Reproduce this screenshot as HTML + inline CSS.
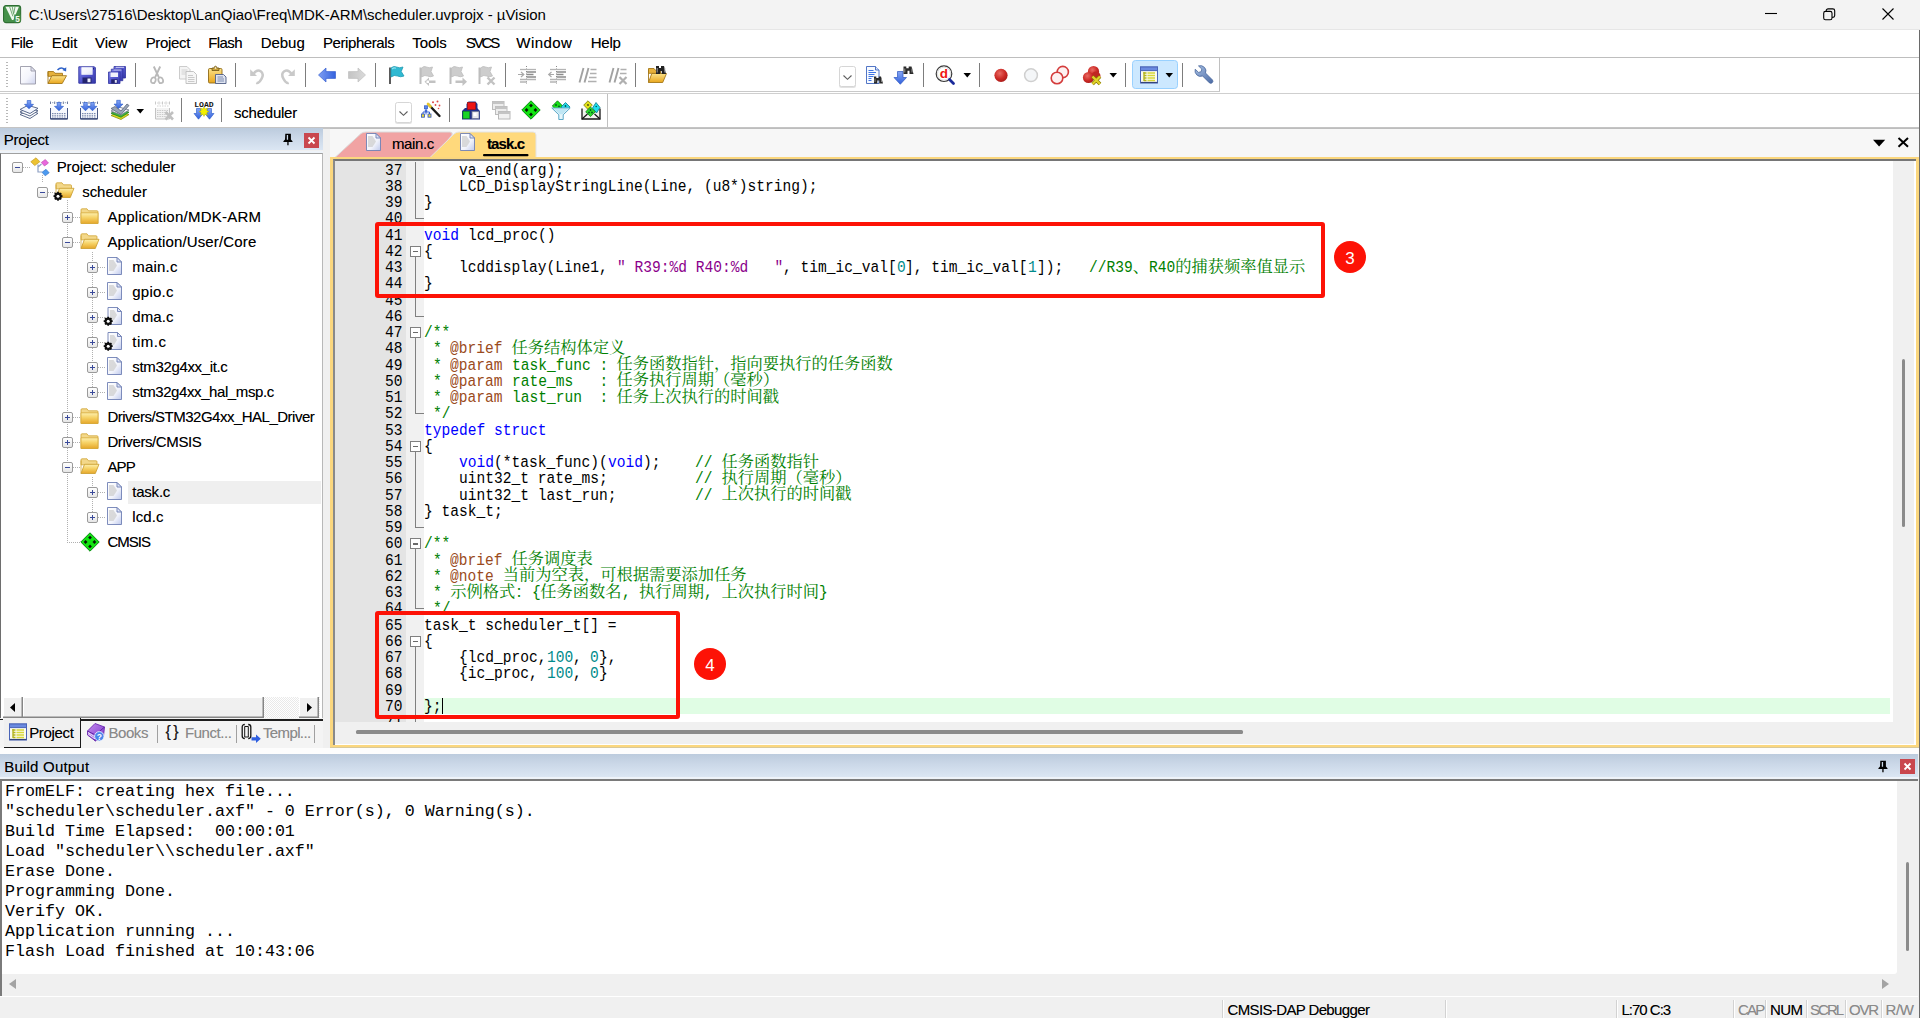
<!DOCTYPE html>
<html lang="zh"><head><meta charset="utf-8"><title>scheduler.uvprojx - µVision</title>
<style>
*{box-sizing:border-box;margin:0;padding:0}
html,body{width:1920px;height:1018px;overflow:hidden;background:#f0f0f0}
body{position:relative;font-family:"Liberation Sans","Noto Sans CJK SC",sans-serif;font-size:15px;color:#000}
.abs{position:absolute}
.t{position:absolute;white-space:pre;line-height:20px;height:20px;text-shadow:0 0 .6px rgba(0,0,0,.42)}
#title .t{text-shadow:none}
.t.g,.t[style*="#8a8a8a"]{text-shadow:0 0 .6px rgba(120,120,120,.4)}
#title{left:0;top:0;width:1920px;height:30px;background:#f3f3f3;border-bottom:1px solid #e6e6e6}
#menu{left:0;top:30px;width:1920px;height:27px;background:#fff}
#menu .t{top:3px}
#tb1{left:0;top:56.500px;width:1920px;height:36.500px;background:#fff;border-top:1.500px solid #bebebe}
#tb2{left:0;top:93px;width:1920px;height:35px;background:#fff;border-top:1px solid #cfcfcf}
.sep{position:absolute;width:1.3px;height:24px;background:#7d7d7d;top:5px}
.grip{position:absolute;left:6px;top:4px;width:2px;height:26px;background:repeating-linear-gradient(#b8b8b8 0 1px,transparent 1px 3px)}
.ic{position:absolute;width:20px;height:20px;top:7px}
.ic svg{display:block;width:20px;height:20px}
.hdr{position:absolute;background:linear-gradient(#bccbdd,#cbd8e8 45%,#dbe6f3);}
.hdr .t{left:5px;top:2px}
.pin{position:absolute}
.xbtn{position:absolute;width:15px;height:15px;background:#c9474e}
/* project */
#proj{left:0;top:153px;width:323px;height:565px;background:#fff;border-left:1.3px solid #6e6e6e;border-top:1.3px solid #a0a0a0;border-right:1.3px solid #b8b8b8}
.row{position:absolute;left:0;height:25px;width:320px}
.row .t{top:2px;height:20px;line-height:20px}
.box{position:absolute;width:11px;height:11px;border:1px solid #9a9a9a;border-radius:2px;background:linear-gradient(#fff,#e6e6e6)}
.box:before{content:"";position:absolute;left:2px;top:4px;width:5px;height:1px;background:#3a4a9a}
.box.p:after{content:"";position:absolute;left:4px;top:2px;width:1px;height:5px;background:#3a4a9a}
.dh{position:absolute;height:1px;background:repeating-linear-gradient(90deg,#b0b0b0 0 1px,transparent 1px 2px)}
.dv{position:absolute;width:1px;background:repeating-linear-gradient(#b0b0b0 0 1px,transparent 1px 2px)}
/* editor */
#edwrap{left:330px;top:128px;width:1589px;height:30px;background:#f7f7f7;border-top:1px solid #bdbdbd}
#edframe{left:330px;top:157px;width:1588.5px;height:591px;background:#fbd77e;border-bottom:1px solid #d8c99a}
#edin{left:3px;top:2px;width:1583px;height:586px;background:#fff;border-left:2px solid #8a8a8a;border-top:2.300px solid #767676}
#code{left:0;top:0;width:1558px;height:560.500px;background:#fff;overflow:hidden}
#gut{left:0;top:0;width:71px;height:561px;background:#e4e4e4}
#fold{left:71px;top:0;width:18px;height:561px;background:#f1f1f1}
.ln{left:50.200px;color:#000}
.fl{position:absolute;left:80px;top:0;width:1px;height:17px;background:#808080}
.fe{position:absolute;left:80px;top:0;width:9px;height:9px;border-left:1px solid #808080;border-bottom:1px solid #808080}
.fb{position:absolute;left:75px;top:3px;width:11px;height:11px;border:1px solid #808080;background:#fff}
.fb:before{content:"";position:absolute;left:2px;top:4px;width:5px;height:1.200px;background:#6a6a6a}
.fb:after{content:"";position:absolute;left:4px;top:10px;width:1px;height:4px;background:#808080}
.cl{position:absolute;left:0;height:17px;width:1556px}
.cd{font-family:"Liberation Mono","Noto Serif CJK SC",monospace;font-size:17.5px;line-height:17px;white-space:pre}
.r{position:absolute;top:0;font-size:16.67px;transform:scaleX(.875);transform-origin:0 0;white-space:pre}
.cj{position:absolute;top:-2.500px;font-family:"Noto Serif CJK SC","Noto Sans CJK SC",serif;font-size:16.25px;white-space:pre}
.k{color:#0000ff}.s{color:#8b008b}.n{color:#008b8b}.c{color:#008000}.d{color:#9a4a20}
.redbox{position:absolute;border:4px solid #fd1206;border-radius:3px}
.badge{position:absolute;width:32px;height:32px;border-radius:16px;background:#fd1206;color:#fff;font-size:17px;line-height:35.500px;text-align:center}
/* build */
#bo{left:0;top:779px;width:1918px;height:217px;background:#f0f0f0;border-left:2px solid #7a7a7a;border-top:2px solid #7a7a7a}
#botext{left:0;top:0;width:1895px;height:193px;border-radius:0 0 3px 0;background:#fff;font-family:"Liberation Mono",monospace;font-size:16.67px;line-height:20px;white-space:pre;padding:1px 0 0 3px;color:#000}
#status{left:0;top:996px;width:1918px;height:22px;background:#f0f0f0;border-top:1px solid #fff}
#status .t{line-height:20px}
.g{color:#8a8a8a}
</style></head>
<body><svg width="0" height="0" style="position:absolute"><defs>
<linearGradient id="gGold" x1="0" y1="0" x2="0" y2="1"><stop offset="0" stop-color="#fbe28a"/><stop offset="1" stop-color="#e9a61c"/></linearGradient>
<linearGradient id="gGold2" x1="0" y1="0" x2="1" y2="1"><stop offset="0" stop-color="#fdeea8"/><stop offset="1" stop-color="#eab233"/></linearGradient>
<linearGradient id="gPage" x1="0" y1="0" x2="1" y2="1"><stop offset="0" stop-color="#ffffff"/><stop offset=".55" stop-color="#f4f5fc"/><stop offset="1" stop-color="#cfd4ee"/></linearGradient>
<linearGradient id="gDisk" x1="0" y1="0" x2="1" y2="1"><stop offset="0" stop-color="#7f82e6"/><stop offset=".5" stop-color="#5558cf"/><stop offset="1" stop-color="#3437a6"/></linearGradient>
<linearGradient id="gBlue" x1="0" y1="0" x2="0" y2="1"><stop offset="0" stop-color="#86a6f4"/><stop offset="1" stop-color="#2f5fdc"/></linearGradient>
<linearGradient id="gBlueH" x1="0" y1="0" x2="1" y2="0"><stop offset="0" stop-color="#7d9df2"/><stop offset="1" stop-color="#3563de"/></linearGradient>
<linearGradient id="gGrayH" x1="0" y1="0" x2="1" y2="0"><stop offset="0" stop-color="#c4c4c4"/><stop offset="1" stop-color="#dadada"/></linearGradient>
<radialGradient id="gRed" cx=".4" cy=".35" r=".7"><stop offset="0" stop-color="#e86a62"/><stop offset=".6" stop-color="#cc2a26"/><stop offset="1" stop-color="#a81a18"/></radialGradient>
<linearGradient id="gWrench" x1="0" y1="0" x2="1" y2="1"><stop offset="0" stop-color="#a8c0e4"/><stop offset="1" stop-color="#4a6aa4"/></linearGradient>
<linearGradient id="gFolder" x1="0" y1="0" x2="0" y2="1"><stop offset="0" stop-color="#fdf0b0"/><stop offset=".45" stop-color="#f6d266"/><stop offset="1" stop-color="#e6a72a"/></linearGradient>
<linearGradient id="gFile" x1="0" y1="0" x2="1" y2="1"><stop offset="0" stop-color="#ffffff"/><stop offset=".6" stop-color="#f1f3fb"/><stop offset="1" stop-color="#bfc9ec"/></linearGradient>
<linearGradient id="gBooks" x1="0" y1="0" x2="1" y2="1"><stop offset="0" stop-color="#c48af0"/><stop offset="1" stop-color="#7a34c8"/></linearGradient>
</defs></svg>
<div class="abs" style="left:1918.5px;top:30px;width:1.5px;height:988px;background:#6a6a6a;z-index:9"></div>
<div id="title" class="abs">
<span class="abs" style="left:2.800px;top:4.700px;width:18.200px;height:18.200px"><svg width="18.2" height="18.2" viewBox="0 0 20 20" overflow="visible"><rect x=".6" y=".6" width="18.800" height="18.800" rx="2.800" fill="#46904a" stroke="#2e6e32" stroke-width="1.200"/><path d="M2.700 2h14.800l-6.100 14.400h-1.500z" fill="#f2f8f0"/><path d="M7.300 2l3.600 10.500M10.200 2l1.600 8.500M13.200 2l-1.300 7" stroke="#46904a" stroke-width=".8" fill="none"/><rect x="12.300" y="10.500" width="7" height="8.500" fill="#46904a"/><text x="16" y="18.300" font-size="9" font-weight="bold" text-anchor="middle" fill="#f6fbf4" font-family="Liberation Sans,sans-serif">5</text></svg></span>
<span class="t" style="left:28.7px;top:5.3px;letter-spacing:-0.02px;">C:\Users\27516\Desktop\LanQiao\Freq\MDK-ARM\scheduler.uvprojx - µVision</span>
<svg class="abs" style="left:1750px;top:0" width="170" height="30" viewBox="0 0 170 30" fill="none" stroke="#000" stroke-width="1.1"><path d="M15 13.5h12"/><rect x="73.700" y="11.400" width="8.300" height="8.300" rx="1.800"/><path d="M76.200 11.400v-.6a1.900 1.900 0 0 1 1.900-1.900h4.700a1.900 1.900 0 0 1 1.900 1.900v4.700a1.900 1.900 0 0 1-1.900 1.900h-.6"/><path d="M132.5 8.5l11 11M143.5 8.5l-11 11"/></svg>
</div>
<div id="menu" class="abs">
<span class="t" style="left:10.7px;top:3px;letter-spacing:-0.39px;">File</span>
<span class="t" style="left:51.7px;top:3px;letter-spacing:-0.06px;">Edit</span>
<span class="t" style="left:95px;top:3px;letter-spacing:0.01px;">View</span>
<span class="t" style="left:145.7px;top:3px;letter-spacing:-0.34px;">Project</span>
<span class="t" style="left:208.3px;top:3px;letter-spacing:-0.60px;">Flash</span>
<span class="t" style="left:260.7px;top:3px;letter-spacing:-0.04px;">Debug</span>
<span class="t" style="left:323px;top:3px;letter-spacing:-0.42px;">Peripherals</span>
<span class="t" style="left:412.3px;top:3px;letter-spacing:-0.12px;">Tools</span>
<span class="t" style="left:465.7px;top:3px;letter-spacing:-2.06px;">SVCS</span>
<span class="t" style="left:516.3px;top:3px;letter-spacing:0.44px;">Window</span>
<span class="t" style="left:590.7px;top:3px;letter-spacing:-0.21px;">Help</span>
</div>
<div id="tb1" class="abs"><div class="grip"></div>
<span class="ic" style="left:18px"><svg width="20" height="20" viewBox="0 0 20 20" overflow="visible"><path d="M2.500 1.500h10.500l4.500 4.500v13h-15z" fill="url(#gPage)" stroke="#9a9aa8" stroke-width=".9"/><path d="M13 1.500v4.500h4.500z" fill="#e2e4f2" stroke="#9a9aa8" stroke-width=".9"/></svg></span>
<span class="ic" style="left:47px"><svg width="20" height="20" viewBox="0 0 20 20" overflow="visible"><path d="M1 6.500h5.500l1.500 1.800h7.500v3h-14.500z" fill="#e7b13a" stroke="#a5781a" stroke-width=".9"/><path d="M1 18.500v-12" stroke="#a5781a" stroke-width=".9"/><path d="M1 18.500l3.800-7.800h14.700l-4.300 7.800z" fill="url(#gGold)" stroke="#a5781a" stroke-width=".9"/><path d="M10.500 5q3.500-3.800 7.200-.6" fill="none" stroke="#2f62c8" stroke-width="1.500"/><path d="M19.300 2.200l-.2 4.300-3.800-1.600z" fill="#2f62c8"/></svg></span>
<span class="ic" style="left:77px"><svg width="20" height="20" viewBox="0 0 20 20" overflow="visible"><path d="M1.800 1.800h15.600l1 1v15.400h-16.600z" fill="url(#gDisk)" stroke="#3033a0" stroke-width=".9"/><rect x="4.500" y="2.300" width="11" height="7.400" fill="#f3f4fd"/><rect x="4.500" y="2.300" width="11" height="7.400" fill="url(#gPage)" opacity=".6"/><rect x="5.500" y="12.500" width="9" height="5.700" fill="#23246e"/><rect x="10.500" y="13.500" width="3" height="3.700" fill="#eceefa"/><rect x="16" y="3" width="1" height="1.500" fill="#23246e"/></svg></span>
<span class="ic" style="left:107px"><svg width="20" height="20" viewBox="0 0 20 20" overflow="visible"><path d="M7 1.500h11.500v11.500h-11.500z" fill="url(#gDisk)" stroke="#3033a0" stroke-width=".8"/><path d="M4.300 4.200h11.500v11.500h-11.500z" fill="url(#gDisk)" stroke="#3033a0" stroke-width=".8"/><path d="M1.500 7h11.500v11.500h-11.500z" fill="url(#gDisk)" stroke="#3033a0" stroke-width=".8"/><rect x="3.500" y="7.500" width="7.500" height="4.500" fill="#f1f2fc"/><rect x="4.200" y="14.300" width="6.300" height="4.200" fill="#23246e"/><rect x="7.800" y="15" width="2" height="2.800" fill="#e4e6f8"/><path d="M9 2.300h8M6.500 5h8" stroke="#e8e9fb" stroke-width="1" opacity=".8"/></svg></span>
<div class="sep" style="left:135px"></div>
<span class="ic" style="left:147px"><svg width="20" height="20" viewBox="0 0 20 20" overflow="visible"><path d="M6.800 1.500l5.200 11.200M13.200 1.500l-5.200 11.200" stroke="#b9b9b9" stroke-width="1.900" fill="none"/><ellipse cx="6.300" cy="15.300" rx="2.300" ry="2.900" fill="none" stroke="#b9b9b9" stroke-width="1.700" transform="rotate(20 6.300 15.300)"/><ellipse cx="13.700" cy="15.300" rx="2.300" ry="2.900" fill="none" stroke="#b9b9b9" stroke-width="1.700" transform="rotate(-20 13.700 15.300)"/></svg></span>
<span class="ic" style="left:177.5px"><svg width="20" height="20" viewBox="0 0 20 20" overflow="visible"><path d="M1.500 1.500h7.500l3 3v9.500h-10.500z" fill="#f4f4f4" stroke="#c6c6c6" stroke-width=".9"/><path d="M3.500 5h6M3.500 7h6M3.500 9h4" stroke="#d2d2d2"/><path d="M8 6.500h7.500l3 3v9h-10.500z" fill="#f6f6f6" stroke="#bdbdbd" stroke-width=".9"/><path d="M10 10.500h5M10 12.500h6.500M10 14.500h6.500M10 16.500h6.500" stroke="#cacaca"/></svg></span>
<span class="ic" style="left:206.5px"><svg width="20" height="20" viewBox="0 0 20 20" overflow="visible"><rect x="1.500" y="3.500" width="13.500" height="14.500" rx="1.200" fill="url(#gGold)" stroke="#8f6a16" stroke-width=".9"/><path d="M5 5.500v-2.500h2q.3-1.800 1.500-1.800t1.500 1.800h2v2.500z" fill="#caa23a" stroke="#6f5512" stroke-width=".8"/><circle cx="8.500" cy="3" r=".8" fill="#fff"/><path d="M8.500 9.500h8l2.500 2.500v6.500h-10.500z" fill="#dfe4f1" stroke="#4f5f86" stroke-width=".9"/><path d="M10.500 12h5.500M10.500 14h6.500M10.500 16h6.500" stroke="#7f8db0"/></svg></span>
<div class="sep" style="left:235px"></div>
<span class="ic" style="left:247.5px"><svg width="20" height="20" viewBox="0 0 20 20" overflow="visible"><path d="M2.200 4.200v6.800h6.800z" fill="#c9c9c9"/><path d="M5.500 8.800q3.500-5 7.200-2.500t.8 7.500-5.200 4" fill="none" stroke="#c9c9c9" stroke-width="2.500"/></svg></span>
<span class="ic" style="left:277px"><svg width="20" height="20" viewBox="0 0 20 20" overflow="visible"><path d="M17.800 4.200v6.800h-6.800z" fill="#c9c9c9"/><path d="M14.500 8.800q-3.500-5-7.200-2.500t-.8 7.500 5.200 4" fill="none" stroke="#c9c9c9" stroke-width="2.500"/></svg></span>
<div class="sep" style="left:305px"></div>
<span class="ic" style="left:317px"><svg width="20" height="20" viewBox="0 0 20 20" overflow="visible"><path d="M1.500 10l7.500-7v3.600h9.500v6.800h-9.500v3.600z" fill="url(#gBlueH)" stroke="#3a62d0" stroke-width=".7"/></svg></span>
<span class="ic" style="left:347px"><svg width="20" height="20" viewBox="0 0 20 20" overflow="visible"><path d="M18.500 10l-7.500-7v3.600h-9.500v6.800h9.500v3.600z" fill="url(#gGrayH)" stroke="#c0c0c0" stroke-width=".7"/></svg></span>
<div class="sep" style="left:375px"></div>
<span class="ic" style="left:386px"><svg width="20" height="20" viewBox="0 0 20 20" overflow="visible"><path d="M4 2.500v16.500" stroke="#5a5a5a" stroke-width="2"/><path d="M5 3q2.500-2.500 5.500-1t6.500 0l-1.800 4.500 2.800 4.500q-3.500 1.500-6.500 0t-6.500 1z" fill="#2fb9d2" stroke="#1e9ab2" stroke-width=".8"/><path d="M6 4q2-1.500 4-.8" stroke="#8fe0ee" stroke-width="1.200" fill="none"/></svg></span>
<span class="ic" style="left:416.5px"><svg width="20" height="20" viewBox="0 0 20 20" overflow="visible"><path d="M3.500 2.500v16.500" stroke="#bdbdbd" stroke-width="2"/><path d="M4.500 3q2.500-2.500 5-1t6 0l-1.500 4.500 2.500 4.500q-3.500 1.500-6 0t-6 1z" fill="#cdcdcd" stroke="#bdbdbd" stroke-width=".8"/><path d="M9.500 15.500h9v2.500h-9zM12 12.500l-4.500 4.200 4.500 4.200z" fill="#c2c2c2"/></svg></span>
<span class="ic" style="left:446.5px"><svg width="20" height="20" viewBox="0 0 20 20" overflow="visible"><path d="M3.500 2.500v16.500" stroke="#bdbdbd" stroke-width="2"/><path d="M4.500 3q2.500-2.500 5-1t6 0l-1.500 4.500 2.500 4.500q-3.500 1.500-6 0t-6 1z" fill="#cdcdcd" stroke="#bdbdbd" stroke-width=".8"/><path d="M8.500 15.500h9v2.500h-9zM15.500 12.500l4.500 4.200-4.500 4.200z" fill="#c2c2c2"/></svg></span>
<span class="ic" style="left:476px"><svg width="20" height="20" viewBox="0 0 20 20" overflow="visible"><path d="M3.500 2.500v16.500" stroke="#bdbdbd" stroke-width="2"/><path d="M4.500 3q2.500-2.500 5-1t6 0l-1.500 4.500 2.500 4.500q-3.500 1.500-6 0t-6 1z" fill="#cdcdcd" stroke="#bdbdbd" stroke-width=".8"/><path d="M11.500 12.500l7 7M18.500 12.500l-7 7" stroke="#c2c2c2" stroke-width="2.400"/></svg></span>
<div class="sep" style="left:505px"></div>
<span class="ic" style="left:517px"><svg width="20" height="20" viewBox="0 0 20 20" overflow="visible"><path d="M9.500 1v18" stroke="#8a8a8a" stroke-width="1" stroke-dasharray="1 1.500"/><path d="M3 4.500h16" stroke="#b4b4b4" stroke-width="1.300"/><path d="M9.500 7h9.500M9.500 9.500h7M9.500 12h9.500" stroke="#8c8c8c" stroke-width="1.600"/><path d="M3 14.500h16M3 17h7" stroke="#b4b4b4" stroke-width="1.300"/><path d="M1 9.500h5M4 7l2.800 2.500-2.800 2.500" stroke="#a8a8a8" stroke-width="1.200" fill="none"/></svg></span>
<span class="ic" style="left:547px"><svg width="20" height="20" viewBox="0 0 20 20" overflow="visible"><path d="M9.500 1v18" stroke="#8a8a8a" stroke-width="1" stroke-dasharray="1 1.500"/><path d="M3 4.500h16" stroke="#b4b4b4" stroke-width="1.300"/><path d="M9.500 7h9.500M9.500 9.500h7M9.500 12h9.500" stroke="#8c8c8c" stroke-width="1.600"/><path d="M3 14.500h16M3 17h7" stroke="#b4b4b4" stroke-width="1.300"/><path d="M2 9.500h5M4.500 7l-2.800 2.500 2.800 2.500" stroke="#a8a8a8" stroke-width="1.200" fill="none"/></svg></span>
<span class="ic" style="left:577.5px"><svg width="20" height="20" viewBox="0 0 20 20" overflow="visible"><path d="M5.500 3l-4 14.500M10.500 3l-4 14.500" stroke="#a2a2a2" stroke-width="1.900"/><path d="M12.500 4.500h6M12 8.500h6.500M11 12.500h7.500M10 16.500h8.500" stroke="#b0b0b0" stroke-width="1.300"/></svg></span>
<span class="ic" style="left:607.5px"><svg width="20" height="20" viewBox="0 0 20 20" overflow="visible"><path d="M5.500 3l-4 14.500M10.500 3l-4 14.500" stroke="#a2a2a2" stroke-width="1.900"/><path d="M12.500 4.500h6M12 8.500h6.500" stroke="#b0b0b0" stroke-width="1.300"/><path d="M11.500 12l7 7M18.500 12l-7 7" stroke="#b0b0b0" stroke-width="2.200"/></svg></span>
<div class="sep" style="left:634.5px"></div>
<span class="ic" style="left:646.5px"><svg width="20" height="20" viewBox="0 0 20 20" overflow="visible"><path d="M1.500 3.500h5.500l1.500 1.800h5v3h-12z" fill="#e7b13a" stroke="#a5781a" stroke-width=".9"/><path d="M1.500 17.500v-13" stroke="#a5781a" stroke-width=".9"/><path d="M1.500 17.500l3.300-9h14.700l-3.800 9z" fill="url(#gGold)" stroke="#a5781a" stroke-width=".9"/><path d="M9 1h3v2h2v-2h3l2 8h-4.200v-3h-1.600v3h-4.200z" fill="#222"/><path d="M10.200 3v4.500M17.800 3v4.500" stroke="#a8a8a8" stroke-width=".9"/></svg></span>
<div class="abs" style="left:838.5px;top:8.5px;width:17px;height:21px;border:1px solid #d6d6d6;border-radius:2.500px;background:#fff;box-shadow:0 1px 0 #e2e2e2"><svg width="15" height="19"><path d="M3.500 8.500l4 3.800 4-3.800" fill="none" stroke="#5c5c5c" stroke-width="1.100"/></svg></div>
<span class="ic" style="left:864px"><svg width="20" height="20" viewBox="0 0 20 20" overflow="visible"><path d="M2.500 1.500h9l3.500 3.500v13.500h-12.500z" fill="#f8fbff" stroke="#3f66c0" stroke-width=".9"/><path d="M11.500 1.500v3.500h3.500" fill="#d8e4fa" stroke="#3f66c0" stroke-width=".9"/><path d="M4.500 5.500h5M4.500 7.500h7.500M4.500 9.500h6M4.500 11.500h5M4.500 13.500h3M4.500 15.500h3" stroke="#3e74e4" stroke-width="1.100"/><path d="M10 11.500h2.300v1.500h2.400v-1.500h2.300l2 7h-3.700v-3h-2v3h-3.300z" fill="#2a2a2a"/><path d="M11 13.500v3.500M17.500 13.500v3.500" stroke="#9a9a9a" stroke-width=".8"/></svg></span>
<span class="ic" style="left:894px"><svg width="20" height="20" viewBox="0 0 20 20" overflow="visible"><path d="M3.500 6.500h5.500v6h3.500l-6.200 6.800-6.300-6.800h3.500z" fill="url(#gBlue)" stroke="#2a55c0" stroke-width=".7"/><path d="M9.500 1.500h2.800v1.800h2.400v-1.800h2.800l2 7.500h-4v-3.200h-2v3.200h-4z" fill="#2a2a2a"/><path d="M10.800 3.500v4M18 3.500v4" stroke="#a0a0a0" stroke-width=".9"/></svg></span>
<div class="sep" style="left:922.5px"></div>
<span class="ic" style="left:934.5px"><svg width="20" height="20" viewBox="0 0 20 20" overflow="visible"><circle cx="9" cy="8.700" r="7.800" fill="#fff" stroke="#3a3a3a" stroke-width="1.200"/><circle cx="9" cy="8.700" r="6.500" fill="none" stroke="#d8d8d8" stroke-width=".9"/><path d="M14.500 14.500l4 4" stroke="#1a2a9a" stroke-width="2.800" stroke-linecap="round"/><text x="8.900" y="12.900" font-size="13.500" font-weight="bold" fill="#f01414" text-anchor="middle" font-family="Liberation Sans,sans-serif">d</text></svg></span>
<svg class="abs" style="left:962.5px;top:15.5px" width="9" height="5"><path d="M0.5 0h7.500l-3.750 4.400z" fill="#000"/></svg>
<div class="sep" style="left:978.5px"></div>
<span class="ic" style="left:991px"><svg width="20" height="20" viewBox="0 0 20 20" overflow="visible"><circle cx="10" cy="10.300" r="6.600" fill="url(#gRed)"/></svg></span>
<span class="ic" style="left:1020.5px"><svg width="20" height="20" viewBox="0 0 20 20" overflow="visible"><circle cx="10" cy="10.200" r="6.400" fill="#f4f6f8" stroke="#cfcfcf" stroke-width="1.500"/></svg></span>
<span class="ic" style="left:1050px"><svg width="20" height="20" viewBox="0 0 20 20" overflow="visible"><circle cx="12.800" cy="7" r="5.600" fill="#fdf1f1" stroke="#d43c3c" stroke-width="1.600"/><circle cx="7" cy="13" r="5.800" fill="#fdf1f1" stroke="#d43c3c" stroke-width="1.600"/></svg></span>
<span class="ic" style="left:1082px"><svg width="20" height="20" viewBox="0 0 20 20" overflow="visible"><circle cx="11.500" cy="6.500" r="5.600" fill="url(#gRed)"/><circle cx="14" cy="11" r="4.500" fill="#c02622"/><circle cx="6.500" cy="12.500" r="5.600" fill="url(#gRed)"/><path d="M10.500 11.500l7.500 7.500M18 11.500l-7.500 7.500" stroke="#8a7a00" stroke-width="3.600"/><path d="M10.500 11.500l7.500 7.500M18 11.500l-7.500 7.500" stroke="#e0d22a" stroke-width="2.200"/></svg></span>
<svg class="abs" style="left:1108.5px;top:15.5px" width="9" height="5"><path d="M0.5 0h7.500l-3.750 4.400z" fill="#000"/></svg>
<div class="sep" style="left:1124.5px"></div>
<div class="abs" style="left:1132px;top:2px;width:46px;height:29px;background:#cce8ff;border:1px solid #99d1ff;border-radius:3.500px"></div>
<span class="ic" style="left:1139px"><svg width="20" height="20" viewBox="0 0 20 20" overflow="visible"><rect x="1.500" y="2" width="17" height="16" fill="#fbfbee" stroke="#4a64b8" stroke-width="1"/><rect x="1.500" y="2" width="17" height="3.600" fill="#6a8ae0" stroke="#4a64b8" stroke-width="1"/><path d="M2 17.500h16.500" stroke="#35457a" stroke-width="1.200"/><path d="M5 7v9" stroke="#b4b41e" stroke-width="1.400"/><path d="M4.500 8h3M5 10.500h2.500M5 13h2.500M5 15.500h2.500" stroke="#b4b41e" stroke-width="1.400"/><path d="M8.500 8h7.500M8.500 10.500h7.500M8.500 13h7.500M8.500 15.500h7.500" stroke="#d8d83a" stroke-width="1.600"/></svg></span>
<svg class="abs" style="left:1165px;top:15.5px" width="9" height="5"><path d="M0.5 0h7.500l-3.750 4.400z" fill="#000"/></svg>
<div class="sep" style="left:1181.5px"></div>
<span class="ic" style="left:1192.5px"><svg width="20" height="20" viewBox="0 0 20 20" overflow="visible"><path d="M2.200 4.200l3.300 3.200 2.600-.7.700-2.600-3.300-3.200q3.600-1 6 1.500t1 5.600l7 7q1 1.500-.3 2.700t-2.700.2l-7-7q-3.200 1.400-5.700-1t-1.600-5.700z" fill="url(#gWrench)" stroke="#48669c" stroke-width=".8"/></svg></span>
<div class="abs" style="left:1219px;top:0;width:1px;height:34px;background:#c0c0c0"></div>
<div class="abs" style="left:0;top:33px;width:1220px;height:1px;background:#c9c9c9"></div>
</div>
<div id="tb2" class="abs"><div class="grip"></div>
<span class="ic" style="left:18.5px;top:5.500px"><svg width="20" height="20" viewBox="0 0 20 20" overflow="visible"><path d="M1 14.500l8-4.200 10 3-8 5.200z" fill="#fff" stroke="#4a5a80" stroke-width=".9"/><path d="M1 12l8-4.200 10 3-8 5.200z" fill="#fff" stroke="#4a5a80" stroke-width=".9"/><path d="M1 9.500l8-4.200 10 3-8 5.200z" fill="#f4f7ff" stroke="#4a5a80" stroke-width=".9"/><path d="M8.2 0.5h3.600v3.800h2.700l-4.500 4.500-4.500-4.500h2.700z" fill="url(#gBlue)" stroke="#2458c8" stroke-width=".6"/></svg></span>
<span class="ic" style="left:48.5px;top:5.500px"><svg width="20" height="20" viewBox="0 0 20 20" overflow="visible"><path d="M1.500 8v11h17v-11" fill="#f6f8fd" stroke="#4a5a86" stroke-width="1"/><path d="M1.500 18.800h17" stroke="#3a4a78" stroke-width="1.300"/><path d="M3 13.500h14M3 15.300h14M3 17h14" stroke="#7a88ac" stroke-width="1" stroke-dasharray="1.500 .9"/><path d="M1.500 1.500v2.500M5.700 1.500v2.500M10 1.500v2.500M14.300 1.500v2.500M18.500 1.500v2.500" stroke="#5a6a90" stroke-width=".9"/><path d="M3 2.700h1.400M7.200 2.700h1.400M11.500 2.700h1.400M15.800 2.700h1.400" stroke="#8a98b8" stroke-width=".9"/><path d="M8.2 2.5h3.600v3.800h2.700l-4.500 4.500-4.500-4.500h2.700z" fill="url(#gBlue)" stroke="#2458c8" stroke-width=".6"/></svg></span>
<span class="ic" style="left:78.5px;top:5.500px"><svg width="20" height="20" viewBox="0 0 20 20" overflow="visible"><path d="M1.500 8v11h17v-11" fill="#f6f8fd" stroke="#4a5a86" stroke-width="1"/><path d="M1.500 18.800h17" stroke="#3a4a78" stroke-width="1.300"/><path d="M3 13.500h14M3 15.300h14M3 17h14" stroke="#7a88ac" stroke-width="1" stroke-dasharray="1.500 .9"/><path d="M1.500 1.500v2.500M5.700 1.500v2.500M10 1.500v2.500M14.300 1.500v2.500M18.500 1.500v2.500" stroke="#5a6a90" stroke-width=".9"/><path d="M3 2.700h1.400M7.200 2.700h1.400M11.500 2.700h1.400M15.800 2.700h1.400" stroke="#8a98b8" stroke-width=".9"/><path d="M4.7 2.5h3.600v3.800h2.700l-4.500 4.500-4.500-4.500h2.700z" fill="url(#gBlue)" stroke="#2458c8" stroke-width=".6"/><path d="M11.7 2.5h3.600v3.800h2.700l-4.500 4.500-4.500-4.500h2.700z" fill="url(#gBlue)" stroke="#2458c8" stroke-width=".6"/></svg></span>
<span class="ic" style="left:109.5px;top:5.500px"><svg width="20" height="20" viewBox="0 0 20 20" overflow="visible"><path d="M1 15.500l8-4 10 3-8 5z" fill="#d6dc1e" stroke="#8a8e10" stroke-width=".8"/><path d="M1 13.200l8-4 10 3-8 5z" fill="#3fb83f" stroke="#237a23" stroke-width=".8"/><path d="M1 11l8-4 10 3-8 5z" fill="#f2f4f8" stroke="#6a7488" stroke-width=".8"/><path d="M1 8.500l4-2 6 4.500 6-7 2 1.500-8 9z" fill="#9aa6b8" stroke="#5a6478" stroke-width=".8"/><path d="M6.7 0.3h3.600v3.800h2.700l-4.500 4.500-4.500-4.500h2.700z" fill="url(#gBlue)" stroke="#2458c8" stroke-width=".6"/></svg></span>
<svg class="abs" style="left:135.5px;top:15px" width="9" height="5"><path d="M0.5 0h7.500l-3.750 4.400z" fill="#000"/></svg>
<span class="ic" style="left:153.5px;top:5.500px"><svg width="20" height="20" viewBox="0 0 20 20" overflow="visible"><path d="M1.500 8v11h14v-11" fill="#f3f3f3" stroke="#c2c2c2" stroke-width="1"/><path d="M3 10.500h11M3 12.500h11M3 14.500h11M3 16.500h11" stroke="#cacaca" stroke-dasharray="1.500 .9"/><path d="M1.500 1.500v3M5 1.500v3M8.500 1.500v3M12 1.500v3M15.500 1.500v3" stroke="#c4c4c4" stroke-width=".9"/><path d="M3 3h1M6.500 3h1M10 3h1M13.500 3h1M3 6h12" stroke="#cfcfcf" stroke-width=".9" stroke-dasharray="1.500 1"/><path d="M11.500 12l7.500 7.500M19 12l-7.500 7.500" stroke="#c0c0c0" stroke-width="2.600"/></svg></span>
<div class="sep" style="left:181px;top:4px"></div>
<span class="ic" style="left:194px;top:5.500px"><svg width="20" height="20" viewBox="0 0 20 20" overflow="visible"><text x="10" y="6.800" font-size="7.800" font-weight="bold" text-anchor="middle" fill="#161616" font-family="Liberation Mono,monospace" textLength="19.500" lengthAdjust="spacingAndGlyphs">LOAD</text><path d="M2.500 8.500h4v5h2.500l-4.500 5.700-4.500-5.700h2.500z" fill="url(#gBlue)" stroke="#2458c8" stroke-width=".6"/><path d="M13.500 8.500h4v5h2.500l-4.500 5.700-4.500-5.700h2.500z" fill="url(#gBlue)" stroke="#2458c8" stroke-width=".6"/><path d="M10 6.800l1.100 2.200 2.400-.9-.9 2.400 2.200 1.100-2.200 1.100.9 2.400-2.400-.9-1.100 2.200-1.100-2.200-2.400.9.900-2.400-2.200-1.100 2.200-1.100-.9-2.400 2.400.9z" fill="#f2f000" stroke="#b4b000" stroke-width=".5"/></svg></span>
<div class="sep" style="left:221px;top:4px"></div>
<div class="abs" style="left:394.5px;top:7.5px;width:17px;height:21px;border:1px solid #d6d6d6;border-radius:2.500px;background:#fff;box-shadow:0 1px 0 #e2e2e2"><svg width="15" height="19"><path d="M3.500 8.500l4 3.800 4-3.800" fill="none" stroke="#5c5c5c" stroke-width="1.100"/></svg></div>
<span class="ic" style="left:421px;top:5.500px"><svg width="20" height="20" viewBox="0 0 20 20" overflow="visible"><path d="M7.500 4.500l11 11.500" stroke="#1a1a1a" stroke-width="2.400" stroke-linecap="round"/><path d="M7 4l2.500 2.600" stroke="#e8c82a" stroke-width="2.600" stroke-linecap="round"/><path d="M5 8v4M2 14.500v-2.500h6.500v2.500M5 12v2.500" fill="none" stroke="#3a62d0" stroke-width="1"/><rect x="3.500" y="5.800" width="3" height="3" fill="#5a8af0" stroke="#2a52c0" stroke-width=".7"/><rect x=".5" y="14" width="3" height="3.200" fill="#e8d83a" stroke="#2a52c0" stroke-width=".8"/><rect x="7" y="14" width="3" height="3.200" fill="#e8d83a" stroke="#2a52c0" stroke-width=".8"/><path d="M3.300 11l1.700-1.500 1.700 1.500-1.700 1.500z" fill="#3a62d0"/><circle cx="12" cy="2.300" r="1" fill="#e04848"/><circle cx="16.500" cy="1.500" r="1" fill="#e04848"/><circle cx="14.500" cy="5" r=".9" fill="#e04848"/><circle cx="18.500" cy="5.500" r=".9" fill="#e04848"/><circle cx="17.500" cy="8.500" r=".8" fill="#e04848"/></svg></span>
<div class="sep" style="left:448.5px;top:4px"></div>
<span class="ic" style="left:461px;top:5.500px"><svg width="20" height="20" viewBox="0 0 20 20" overflow="visible"><path d="M1 11l3-3h12l3 3v8.500h-18z" fill="#1f2f8a"/><path d="M5.500 4l2-2.500h7l2 2.500v5.500h-11z" fill="#1f2f8a"/><rect x="6.500" y="2.500" width="8" height="7" fill="#ee1414" stroke="#a40c0c" stroke-width=".6"/><rect x="2" y="11.500" width="6.500" height="7" fill="#18d428" stroke="#0c8a18" stroke-width=".6"/><rect x="11" y="11.500" width="7" height="7" fill="#e9e9ee" stroke="#6f7894" stroke-width=".8"/><rect x="12.500" y="13" width="3" height="3" fill="#fff"/></svg></span>
<span class="ic" style="left:491px;top:5.500px"><svg width="20" height="20" viewBox="0 0 20 20" overflow="visible"><rect x="1.500" y="1.500" width="11.500" height="8" fill="#ededed" stroke="#bcbcbc" stroke-width="1"/><rect x="1.500" y="1.500" width="11.500" height="2.500" fill="#c4c4c4"/><rect x="4.500" y="6.500" width="11.500" height="8" fill="#ededed" stroke="#bcbcbc" stroke-width="1"/><rect x="4.500" y="6.500" width="11.500" height="2.500" fill="#c4c4c4"/><rect x="7.500" y="11.500" width="11.500" height="7.500" fill="#f1f1f1" stroke="#b8b8b8" stroke-width="1"/><rect x="7.500" y="11.500" width="11.500" height="2.500" fill="#c4c4c4"/></svg></span>
<span class="ic" style="left:520.5px;top:5.500px"><svg width="20" height="20" viewBox="0 0 20 20" overflow="visible"><path d="M10 .8l9.200 9.200-9.200 9.200-9.200-9.200z" fill="#12e412" stroke="#0a8a12" stroke-width="1"/><path d="M10 3.700l1.900 1.900-1.900 1.900-1.900-1.900zM10 12.500l1.900 1.900-1.900 1.900-1.900-1.900zM5.600 8.100l1.900 1.900-1.900 1.900-1.900-1.900zM14.400 8.100l1.900 1.900-1.900 1.900-1.900-1.900z" fill="#041a04"/></svg></span>
<span class="ic" style="left:551px;top:5.500px"><svg width="20" height="20" viewBox="0 0 20 20" overflow="visible"><path d="M6.500 .8l5.200 5.200-5.200 5.200-5.200-5.200z" fill="#18e018" stroke="#0a7a14" stroke-width=".8"/><path d="M14.500 2.500l4.500 4.500-4.500 4.500-4.500-4.500z" fill="#28d8e8" stroke="#0a7a8a" stroke-width=".8"/><circle cx="5" cy="5" r=".9" fill="#052"/><circle cx="8" cy="6.500" r=".9" fill="#052"/><circle cx="14.500" cy="6" r=".9" fill="#055"/><path d="M.8 8h18.400l-7 6.800v4.700h-4.400v-4.700z" fill="#e6f6fb" stroke="#5aa8c8" stroke-width="1"/><path d="M3 9h14l-5.500 5.200h-3z" fill="#bfe6f4"/></svg></span>
<span class="ic" style="left:580.5px;top:5.500px"><svg width="20" height="20" viewBox="0 0 20 20" overflow="visible"><path d="M1 8.500v10.500h18v-10.500" fill="#f3f3ee" stroke="#161616" stroke-width="1.300"/><path d="M7 .8l4.300 4.300-4.300 4.300-4.300-4.300z" fill="#e2e21a" stroke="#7a7a0a" stroke-width=".8"/><path d="M15 2.500l4 5-3.500 5.500-4-5z" fill="#1fdfee" stroke="#0a7a8a" stroke-width=".8"/><path d="M9.500 7l4.800 4.800-4.800 4.800-4.800-4.800z" fill="#2be02b" stroke="#0a7a14" stroke-width=".8"/><circle cx="7" cy="5" r=".9" fill="#441"/><circle cx="9.500" cy="10" r=".9" fill="#052"/><circle cx="8" cy="12.500" r=".9" fill="#052"/><circle cx="11" cy="12.500" r=".9" fill="#052"/><circle cx="15.200" cy="6.500" r=".8" fill="#055"/><path d="M1 19l5.500-5M19 19l-5.500-5" stroke="#161616" stroke-width="1.200"/></svg></span>
<span class="t" style="left:234px;top:9px;letter-spacing:-0.23px;">scheduler</span>
<div class="abs" style="left:607px;top:0;width:1px;height:33px;background:#c0c0c0"></div>
<div class="abs" style="left:0;top:33px;width:1920px;height:2px;background:#c4c4c4"></div>
</div>
<div class="hdr" style="left:0;top:128px;width:323px;height:22px"><span class="t" style="left:3.8px;top:2px;letter-spacing:-0.27px;">Project</span>
<svg class="pin" style="left:283px;top:5px" width="10" height="13" viewBox="0 0 10 13"><path d="M2.300 .8h5.600v5.700l1.600 1.700v.7h-3.900v3.300h-1.300v-3.300h-3.900v-.7l1.600-1.700z M3.800 2v4.800h1.300v-4.800z" fill="#000" fill-rule="evenodd"/></svg>
<span class="xbtn" style="left:304px;top:5px"><svg width="15" height="15"><path d="M4.5 4.5l6 6M10.5 4.5l-6 6" stroke="#fff" stroke-width="1.8"/></svg></span></div>
<div class="abs" style="left:0;top:151px;width:323px;height:2px;background:#eef3f9"></div>
<div id="proj" class="abs">
<div class="dv" style="left:40.500px;top:21.300px;height:8px"></div>
<div class="dv" style="left:65.500px;top:46.300px;height:343px"></div>
<div class="dv" style="left:90.500px;top:98.300px;height:141px"></div>
<div class="dv" style="left:90.500px;top:323.300px;height:41px"></div>
<div class="row" style="top:1.3px">
<div class="dh" style="left:21.5px;top:12px;width:7px"></div>
<div class="box " style="left:10.5px;top:7px"></div>
<span class="abs" style="left:28.5px;top:2px;width:20px;height:20px"><svg width="20" height="20" viewBox="0 0 20 20" overflow="visible"><path d="M.8 4.700l5.200-3.900 3.900 3.900-5.200 3.900z" fill="#ecc233" stroke="#b8901a" stroke-width=".6"/><path d="M11.300 5.500l4-3 3.200 3.500-4 3z" fill="#e868dc" stroke="#b848ac" stroke-width=".6"/><path d="M12 15.300l4-3 3.200 3.500-4 3z" fill="#4c9af0" stroke="#2c6cc0" stroke-width=".6"/><path d="M8 7.500v7.500h4M8 10l3.500-3" fill="none" stroke="#8ea0c4" stroke-width="1.200"/></svg></span>
<span class="t" style="left:55.7px;top:2px;letter-spacing:-0.08px;">Project: scheduler</span>
</div>
<div class="row" style="top:26.3px">
<div class="dh" style="left:46.5px;top:12px;width:7px"></div>
<div class="box " style="left:35.5px;top:7px"></div>
<span class="abs" style="left:53.5px;top:2px;width:20px;height:20px"><svg width="20" height="20" viewBox="0 0 20 20" overflow="visible"><path d="M1 1.800q0-1 1-1h5l1.500 2h7q1 0 1 1v3h-15.500z" fill="#f3d88a" stroke="#d0a436" stroke-width=".8"/><path d="M1 15.500v-13" stroke="#d0a436" stroke-width=".8"/><path d="M1 15.500l3.500-9.200h14.500l-3.700 9.200z" fill="url(#gFolder)" stroke="#c89a2a" stroke-width=".8"/><g stroke="#0c0c0c" stroke-width="1.700"><path d="M3 9.7v9M-1.5 14.2h9M-0.20000000000000018 11.0l6.400 6.400M6.2 11.0l-6.400 6.400"/></g><circle cx="3" cy="14.2" r="1.500" fill="#fff"/><circle cx="3" cy="14.2" r="3" fill="none" stroke="#0c0c0c" stroke-width="1.400"/></svg></span>
<span class="t" style="left:81.2px;top:2px;letter-spacing:-0.04px;">scheduler</span>
</div>
<div class="row" style="top:51.3px">
<div class="dh" style="left:71.5px;top:12px;width:7px"></div>
<div class="box p" style="left:60.5px;top:7px"></div>
<span class="abs" style="left:78.5px;top:2px;width:20px;height:20px"><svg width="20" height="20" viewBox="0 0 20 20" overflow="visible"><path d="M1 2.800q0-1 1-1h5l1.500 2h8.500q1 0 1 1v11.700h-17z" fill="#f3d88a" stroke="#d0a436" stroke-width=".8"/><path d="M1 5.800h17v10.700h-17z" fill="url(#gFolder)" stroke="#d6aa3a" stroke-width=".8"/></svg></span>
<span class="t" style="left:106.4px;top:2px;letter-spacing:0.25px;">Application/MDK-ARM</span>
</div>
<div class="row" style="top:76.3px">
<div class="dh" style="left:71.5px;top:12px;width:7px"></div>
<div class="box " style="left:60.5px;top:7px"></div>
<span class="abs" style="left:78.5px;top:2px;width:20px;height:20px"><svg width="20" height="20" viewBox="0 0 20 20" overflow="visible"><path d="M1 2.800q0-1 1-1h5l1.500 2h7.500q1 0 1 1v3h-16z" fill="#f3d88a" stroke="#d0a436" stroke-width=".8"/><path d="M1 16.500v-13" stroke="#d0a436" stroke-width=".8"/><path d="M1 16.500l3.500-9.200h14.500l-3.700 9.200z" fill="url(#gFolder)" stroke="#c89a2a" stroke-width=".8"/></svg></span>
<span class="t" style="left:106.4px;top:2px;letter-spacing:0.15px;">Application/User/Core</span>
</div>
<div class="row" style="top:101.3px">
<div class="dh" style="left:96.5px;top:12px;width:7px"></div>
<div class="box p" style="left:85.5px;top:7px"></div>
<span class="abs" style="left:103.5px;top:2px;width:20px;height:20px"><svg width="20" height="20" viewBox="0 0 20 20" overflow="visible"><path d="M2.500 .5h9.500l4.500 4.500v12.500h-14z" fill="url(#gFile)" stroke="#6f80b4" stroke-width=".9"/><path d="M12 .5v4.500h4.500z" fill="#dfe5f7" stroke="#6f80b4" stroke-width=".9"/><path d="M4 3h4.500l3.500 5.500-3.500 5.500h-4.500z" fill="#cfcfcf" opacity=".75"/></svg></span>
<span class="t" style="left:131.3px;top:2px;letter-spacing:0.19px;">main.c</span>
</div>
<div class="row" style="top:126.3px">
<div class="dh" style="left:96.5px;top:12px;width:7px"></div>
<div class="box p" style="left:85.5px;top:7px"></div>
<span class="abs" style="left:103.5px;top:2px;width:20px;height:20px"><svg width="20" height="20" viewBox="0 0 20 20" overflow="visible"><path d="M2.500 .5h9.500l4.500 4.500v12.500h-14z" fill="url(#gFile)" stroke="#6f80b4" stroke-width=".9"/><path d="M12 .5v4.500h4.500z" fill="#dfe5f7" stroke="#6f80b4" stroke-width=".9"/><path d="M4 3h4.500l3.500 5.500-3.500 5.500h-4.500z" fill="#cfcfcf" opacity=".75"/></svg></span>
<span class="t" style="left:131.3px;top:2px;letter-spacing:0.23px;">gpio.c</span>
</div>
<div class="row" style="top:151.3px">
<div class="dh" style="left:96.5px;top:12px;width:7px"></div>
<div class="box p" style="left:85.5px;top:7px"></div>
<span class="abs" style="left:103.5px;top:2px;width:20px;height:20px"><svg width="20" height="20" viewBox="0 0 20 20" overflow="visible"><path d="M3 .5h9.500l4 4v13h-13.500z" fill="url(#gFile)" stroke="#6f80b4" stroke-width=".9"/><path d="M12.500 .5v4h4z" fill="#dfe5f7" stroke="#6f80b4" stroke-width=".9"/><path d="M5 3h4l3 5-3 5h-4z" fill="#cfcfcf" opacity=".75"/><g stroke="#0c0c0c" stroke-width="1.700"><path d="M3.2 9.7v9M-1.2999999999999998 14.2h9M0.0 11.0l6.400 6.400M6.4 11.0l-6.400 6.400"/></g><circle cx="3.2" cy="14.2" r="1.500" fill="#fff"/><circle cx="3.2" cy="14.2" r="3" fill="none" stroke="#0c0c0c" stroke-width="1.400"/></svg></span>
<span class="t" style="left:131.3px;top:2px;letter-spacing:0.11px;">dma.c</span>
</div>
<div class="row" style="top:176.3px">
<div class="dh" style="left:96.5px;top:12px;width:7px"></div>
<div class="box p" style="left:85.5px;top:7px"></div>
<span class="abs" style="left:103.5px;top:2px;width:20px;height:20px"><svg width="20" height="20" viewBox="0 0 20 20" overflow="visible"><path d="M3 .5h9.500l4 4v13h-13.500z" fill="url(#gFile)" stroke="#6f80b4" stroke-width=".9"/><path d="M12.500 .5v4h4z" fill="#dfe5f7" stroke="#6f80b4" stroke-width=".9"/><path d="M5 3h4l3 5-3 5h-4z" fill="#cfcfcf" opacity=".75"/><g stroke="#0c0c0c" stroke-width="1.700"><path d="M3.2 9.7v9M-1.2999999999999998 14.2h9M0.0 11.0l6.400 6.400M6.4 11.0l-6.400 6.400"/></g><circle cx="3.2" cy="14.2" r="1.500" fill="#fff"/><circle cx="3.2" cy="14.2" r="3" fill="none" stroke="#0c0c0c" stroke-width="1.400"/></svg></span>
<span class="t" style="left:131.3px;top:2px;letter-spacing:0.49px;">tim.c</span>
</div>
<div class="row" style="top:201.3px">
<div class="dh" style="left:96.5px;top:12px;width:7px"></div>
<div class="box p" style="left:85.5px;top:7px"></div>
<span class="abs" style="left:103.5px;top:2px;width:20px;height:20px"><svg width="20" height="20" viewBox="0 0 20 20" overflow="visible"><path d="M2.500 .5h9.500l4.500 4.500v12.500h-14z" fill="url(#gFile)" stroke="#6f80b4" stroke-width=".9"/><path d="M12 .5v4.500h4.500z" fill="#dfe5f7" stroke="#6f80b4" stroke-width=".9"/><path d="M4 3h4.500l3.500 5.500-3.500 5.500h-4.500z" fill="#cfcfcf" opacity=".75"/></svg></span>
<span class="t" style="left:131.3px;top:2px;letter-spacing:-0.35px;">stm32g4xx_it.c</span>
</div>
<div class="row" style="top:226.3px">
<div class="dh" style="left:96.5px;top:12px;width:7px"></div>
<div class="box p" style="left:85.5px;top:7px"></div>
<span class="abs" style="left:103.5px;top:2px;width:20px;height:20px"><svg width="20" height="20" viewBox="0 0 20 20" overflow="visible"><path d="M2.500 .5h9.500l4.500 4.500v12.500h-14z" fill="url(#gFile)" stroke="#6f80b4" stroke-width=".9"/><path d="M12 .5v4.500h4.500z" fill="#dfe5f7" stroke="#6f80b4" stroke-width=".9"/><path d="M4 3h4.500l3.500 5.500-3.500 5.500h-4.500z" fill="#cfcfcf" opacity=".75"/></svg></span>
<span class="t" style="left:131.3px;top:2px;letter-spacing:-0.41px;">stm32g4xx_hal_msp.c</span>
</div>
<div class="row" style="top:251.3px">
<div class="dh" style="left:71.5px;top:12px;width:7px"></div>
<div class="box p" style="left:60.5px;top:7px"></div>
<span class="abs" style="left:78.5px;top:2px;width:20px;height:20px"><svg width="20" height="20" viewBox="0 0 20 20" overflow="visible"><path d="M1 2.800q0-1 1-1h5l1.500 2h8.500q1 0 1 1v11.700h-17z" fill="#f3d88a" stroke="#d0a436" stroke-width=".8"/><path d="M1 5.800h17v10.700h-17z" fill="url(#gFolder)" stroke="#d6aa3a" stroke-width=".8"/></svg></span>
<span class="t" style="left:106.4px;top:2px;letter-spacing:-0.50px;">Drivers/STM32G4xx_HAL_Driver</span>
</div>
<div class="row" style="top:276.3px">
<div class="dh" style="left:71.5px;top:12px;width:7px"></div>
<div class="box p" style="left:60.5px;top:7px"></div>
<span class="abs" style="left:78.5px;top:2px;width:20px;height:20px"><svg width="20" height="20" viewBox="0 0 20 20" overflow="visible"><path d="M1 2.800q0-1 1-1h5l1.500 2h8.500q1 0 1 1v11.700h-17z" fill="#f3d88a" stroke="#d0a436" stroke-width=".8"/><path d="M1 5.800h17v10.700h-17z" fill="url(#gFolder)" stroke="#d6aa3a" stroke-width=".8"/></svg></span>
<span class="t" style="left:106.4px;top:2px;letter-spacing:-0.40px;">Drivers/CMSIS</span>
</div>
<div class="row" style="top:301.3px">
<div class="dh" style="left:71.5px;top:12px;width:7px"></div>
<div class="box " style="left:60.5px;top:7px"></div>
<span class="abs" style="left:78.5px;top:2px;width:20px;height:20px"><svg width="20" height="20" viewBox="0 0 20 20" overflow="visible"><path d="M1 2.800q0-1 1-1h5l1.500 2h7.500q1 0 1 1v3h-16z" fill="#f3d88a" stroke="#d0a436" stroke-width=".8"/><path d="M1 16.500v-13" stroke="#d0a436" stroke-width=".8"/><path d="M1 16.500l3.500-9.200h14.500l-3.700 9.200z" fill="url(#gFolder)" stroke="#c89a2a" stroke-width=".8"/></svg></span>
<span class="t" style="left:106.4px;top:2px;letter-spacing:-0.87px;">APP</span>
</div>
<div class="row" style="top:326.3px">
<div class="abs" style="left:126.5px;top:1px;width:193.5px;height:23px;background:#efefef"></div>
<div class="dh" style="left:96.5px;top:12px;width:7px"></div>
<div class="box p" style="left:85.5px;top:7px"></div>
<span class="abs" style="left:103.5px;top:2px;width:20px;height:20px"><svg width="20" height="20" viewBox="0 0 20 20" overflow="visible"><path d="M2.500 .5h9.500l4.500 4.500v12.500h-14z" fill="url(#gFile)" stroke="#6f80b4" stroke-width=".9"/><path d="M12 .5v4.500h4.500z" fill="#dfe5f7" stroke="#6f80b4" stroke-width=".9"/><path d="M4 3h4.500l3.500 5.500-3.500 5.500h-4.500z" fill="#cfcfcf" opacity=".75"/></svg></span>
<span class="t" style="left:131.3px;top:2px;letter-spacing:-0.23px;">task.c</span>
</div>
<div class="row" style="top:351.3px">
<div class="dh" style="left:96.5px;top:12px;width:7px"></div>
<div class="box p" style="left:85.5px;top:7px"></div>
<span class="abs" style="left:103.5px;top:2px;width:20px;height:20px"><svg width="20" height="20" viewBox="0 0 20 20" overflow="visible"><path d="M2.500 .5h9.500l4.500 4.500v12.500h-14z" fill="url(#gFile)" stroke="#6f80b4" stroke-width=".9"/><path d="M12 .5v4.500h4.500z" fill="#dfe5f7" stroke="#6f80b4" stroke-width=".9"/><path d="M4 3h4.500l3.500 5.500-3.500 5.500h-4.500z" fill="#cfcfcf" opacity=".75"/></svg></span>
<span class="t" style="left:131.3px;top:2px;letter-spacing:0.09px;">lcd.c</span>
</div>
<div class="row" style="top:376.3px">
<div class="dh" style="left:65.5px;top:12px;width:14px"></div>
<span class="abs" style="left:78.5px;top:2px;width:20px;height:20px"><svg width="20" height="20" viewBox="0 0 20 20" overflow="visible"><path d="M10 .8l9.200 9.200-9.200 9.200-9.200-9.200z" fill="#12e412" stroke="#0a8a12" stroke-width="1"/><path d="M10 3.700l1.900 1.900-1.900 1.900-1.900-1.900zM10 12.500l1.900 1.900-1.900 1.900-1.900-1.900zM5.600 8.100l1.900 1.900-1.900 1.900-1.900-1.900zM14.400 8.100l1.900 1.900-1.900 1.900-1.900-1.900z" fill="#041a04"/></svg></span>
<span class="t" style="left:106.4px;top:2px;letter-spacing:-0.98px;">CMSIS</span>
</div>
<div class="abs" style="left:2px;top:543px;width:317px;height:21px;background:repeating-conic-gradient(#fff 0 25%,#e9e9e9 0 50%) 0 0/2px 2px"></div>
<div class="abs" style="left:2px;top:543px;width:20px;height:21px;background:#f0f0f0;box-shadow:inset -1.500px -1.500px #868686,inset 1px 1px #fff"><svg width="20" height="21"><path d="M12 6v9l-5-4.5z"/></svg></div>
<div class="abs" style="left:22px;top:543px;width:241px;height:21px;background:#f0f0f0;box-shadow:inset -1.500px -1.500px #868686,inset 1px 1px #fff"></div>
<div class="abs" style="left:298px;top:543px;width:20px;height:21px;background:#f0f0f0;box-shadow:inset -1.500px -1.500px #868686,inset 1px 1px #fff"><svg width="20" height="21"><path d="M8 6v9l5-4.5z"/></svg></div>
</div>
<div class="abs" style="left:0;top:718px;width:323px;height:30px;background:#f4f4f4"></div>
<div class="abs" style="left:80px;top:718.5px;width:243px;height:2px;background:#1e1e1e"></div>
<div class="abs" style="left:0;top:718.5px;width:3px;height:1.5px;background:#1e1e1e"></div>
<div class="abs" style="left:3.5px;top:718px;width:77.5px;height:29.5px;background:#f0f0f0;border-right:1.5px solid #1a1a1a;border-bottom:1.5px solid #1a1a1a"></div>
<span class="abs" style="left:8px;top:722px;width:20px;height:20px"><svg width="20" height="20" viewBox="0 0 20 20" overflow="visible"><rect x="1.500" y="2" width="17" height="16" fill="#fbfbee" stroke="#4a64b8" stroke-width="1"/><rect x="1.500" y="2" width="17" height="3.600" fill="#6a8ae0" stroke="#4a64b8" stroke-width="1"/><path d="M2 17.500h16.500" stroke="#35457a" stroke-width="1.200"/><path d="M5 7v9" stroke="#b4b41e" stroke-width="1.400"/><path d="M4.500 8h3M5 10.500h2.500M5 13h2.500M5 15.500h2.500" stroke="#b4b41e" stroke-width="1.400"/><path d="M8.500 8h7.500M8.500 10.500h7.500M8.500 13h7.500M8.500 15.500h7.500" stroke="#d8d83a" stroke-width="1.600"/></svg></span>
<span class="t" style="left:29.2px;top:723px;letter-spacing:-0.34px;">Project</span>
<span class="abs" style="left:86px;top:722px;width:20px;height:20px"><svg width="20" height="20" viewBox="0 0 20 20" overflow="visible"><path d="M1.500 9l7.500-7.500 9.500 3.500-1 9-8 5-8-6z" fill="url(#gBooks)" stroke="#6a28b0" stroke-width=".9"/><path d="M1.500 9l8 4 9-8M9.500 13l-.5 6" fill="none" stroke="#5a1ea0" stroke-width=".9"/><path d="M2.200 12l7 5M2 10.500l7.200 4.500" stroke="#efe6fb" stroke-width="1"/><circle cx="13.300" cy="14.300" r="4.700" fill="#4a86ea" stroke="#e8efff" stroke-width=".9"/><text x="13.300" y="17.500" font-size="8.500" font-weight="bold" text-anchor="middle" fill="#fff" font-family="Liberation Sans,sans-serif">?</text></svg></span>
<span class="t" style="left:108.4px;top:723px;letter-spacing:-0.42px;color:#8a8a8a">Books</span>
<div class="abs" style="left:157px;top:725px;width:1px;height:18px;background:#a0a0a0"></div>
<span class="t" style="left:165.5px;top:722px;font-size:16px;letter-spacing:2.500px;color:#1c1c1c">{}</span>
<span class="t" style="left:185px;top:723px;letter-spacing:-0.44px;color:#8a8a8a">Funct...</span>
<div class="abs" style="left:236px;top:725px;width:1px;height:18px;background:#a0a0a0"></div>
<span class="abs" style="left:241px;top:722px;width:20px;height:20px"><svg width="20" height="20" viewBox="0 0 20 20" overflow="visible"><path d="M3.800 2.500q-2.600 0-2.600 2.500v9q0 2.500 2.600 2.500M7.200 2.500q2.600 0 2.600 2.500v9q0 2.500-2.600 2.500" fill="none" stroke="#161616" stroke-width="1.300"/><path d="M3.700 4.500h3.600v10.500h-3.600z" fill="none" stroke="#161616" stroke-width="1"/><path d="M10.500 15.200h4.500v-2.600l4.800 4.200-4.800 4.200v-2.600h-4.500z" fill="#2f5fe0"/></svg></span>
<span class="t" style="left:263px;top:723px;letter-spacing:-0.63px;color:#8a8a8a">Templ...</span>
<div class="abs" style="left:314px;top:725px;width:1px;height:18px;background:#a0a0a0"></div>
<div id="edwrap" class="abs"></div>
<svg class="abs" style="left:330px;top:128px" width="260" height="30" viewBox="0 0 260 30"><path d="M5 29.5 L31 5.5 Q33 4 36 4 L120 4 Q123 4 122 7 L104 29.5z" fill="#f1a3a3" stroke="#dcdcdc" stroke-width="1"/><path d="M100 29.5 L124 6 Q126 4 129 4 L203 4 Q206 4 206 7 L206 29.5z" fill="#ffd97c" stroke="#e4e4e4" stroke-width="1"/><rect x="153" y="26" width="45.500" height="2.200" rx="1" fill="#000"/></svg>
<span class="abs" style="left:364px;top:133px;width:20px;height:20px"><svg width="20" height="20" viewBox="0 0 20 20" overflow="visible"><path d="M2.500 .5h9.500l4.500 4.500v12.500h-14z" fill="url(#gFile)" stroke="#6f80b4" stroke-width=".9"/><path d="M12 .5v4.500h4.500z" fill="#dfe5f7" stroke="#6f80b4" stroke-width=".9"/><path d="M4 3h4.500l3.500 5.500-3.500 5.500h-4.500z" fill="#cfcfcf" opacity=".75"/></svg></span>
<span class="t" style="left:392px;top:134px;letter-spacing:-0.40px;">main.c</span>
<span class="abs" style="left:458px;top:133px;width:20px;height:20px"><svg width="20" height="20" viewBox="0 0 20 20" overflow="visible"><path d="M2.500 .5h9.500l4.500 4.500v12.500h-14z" fill="url(#gFile)" stroke="#6f80b4" stroke-width=".9"/><path d="M12 .5v4.500h4.500z" fill="#dfe5f7" stroke="#6f80b4" stroke-width=".9"/><path d="M4 3h4.500l3.500 5.500-3.500 5.500h-4.500z" fill="#cfcfcf" opacity=".75"/></svg></span>
<span class="t" style="left:487px;top:134px;font-weight:bold;letter-spacing:-0.91px;">task.c</span>
<svg class="abs" style="left:1872px;top:136px" width="40" height="14"><path d="M1 3.700h12.200l-6.100 6.800z" fill="#000"/><path d="M26.500 2l9.500 8.800M36 2l-9.500 8.800" fill="none" stroke="#000" stroke-width="2"/></svg>
<div id="edframe" class="abs"><div id="edin" class="abs"><div id="code" class="abs cd">
<div id="gut" class="abs"></div><div id="fold" class="abs"></div>
<div class="cl" style="top:0.7px">
<span class="ln r">37</span>
<i class="fl"></i>
<span class="r " style="left:124px">va_end(arg);</span>
</div>
<div class="cl" style="top:16.95px">
<span class="ln r">38</span>
<i class="fl"></i>
<span class="r " style="left:124px">LCD_DisplayStringLine(Line, (u8*)string);</span>
</div>
<div class="cl" style="top:33.2px">
<span class="ln r">39</span>
<i class="fl"></i>
<span class="r " style="left:89px">}</span>
</div>
<div class="cl" style="top:49.45px">
<span class="ln r">40</span>
<i class="fe"></i>
</div>
<div class="cl" style="top:65.7px">
<span class="ln r">41</span>
<span class="r k" style="left:89px">void</span>
<span class="r " style="left:132.75px">lcd_proc()</span>
</div>
<div class="cl" style="top:81.95px">
<span class="ln r">42</span>
<i class="fb"></i>
<span class="r " style="left:89px">{</span>
</div>
<div class="cl" style="top:98.2px">
<span class="ln r">43</span>
<i class="fl"></i>
<span class="r " style="left:124px">lcddisplay(Line1,</span>
<span class="r s" style="left:281.5px">&quot; R39:%d R40:%d   &quot;</span>
<span class="r " style="left:447.75px">, tim_ic_val[</span>
<span class="r n" style="left:561.5px">0</span>
<span class="r " style="left:570.25px">], tim_ic_val[</span>
<span class="r n" style="left:692.75px">1</span>
<span class="r " style="left:701.5px">]);</span>
<span class="r c" style="left:754px">//R39</span>
<span class="cj c" style="left:797.75px">、</span>
<span class="r c" style="left:814px">R40</span>
<span class="cj c" style="left:840.25px">的捕获频率值显示</span>
</div>
<div class="cl" style="top:114.45px">
<span class="ln r">44</span>
<i class="fl"></i>
<span class="r " style="left:89px">}</span>
</div>
<div class="cl" style="top:130.7px">
<span class="ln r">45</span>
<i class="fl"></i>
</div>
<div class="cl" style="top:146.95px">
<span class="ln r">46</span>
<i class="fe"></i>
</div>
<div class="cl" style="top:163.2px">
<span class="ln r">47</span>
<i class="fb"></i>
<span class="r c" style="left:89px">/**</span>
</div>
<div class="cl" style="top:179.45px">
<span class="ln r">48</span>
<i class="fl"></i>
<span class="r c" style="left:97.75px">*</span>
<span class="r d" style="left:115.25px">@brief</span>
<span class="cj c" style="left:176.5px">任务结构体定义</span>
</div>
<div class="cl" style="top:195.7px">
<span class="ln r">49</span>
<i class="fl"></i>
<span class="r c" style="left:97.75px">*</span>
<span class="r d" style="left:115.25px">@param</span>
<span class="r c" style="left:176.5px">task_func :</span>
<span class="cj c" style="left:281.5px">任务函数指针，指向要执行的任务函数</span>
</div>
<div class="cl" style="top:211.95px">
<span class="ln r">50</span>
<i class="fl"></i>
<span class="r c" style="left:97.75px">*</span>
<span class="r d" style="left:115.25px">@param</span>
<span class="r c" style="left:176.5px">rate_ms   :</span>
<span class="cj c" style="left:281.5px">任务执行周期（毫秒）</span>
</div>
<div class="cl" style="top:228.2px">
<span class="ln r">51</span>
<i class="fl"></i>
<span class="r c" style="left:97.75px">*</span>
<span class="r d" style="left:115.25px">@param</span>
<span class="r c" style="left:176.5px">last_run  :</span>
<span class="cj c" style="left:281.5px">任务上次执行的时间戳</span>
</div>
<div class="cl" style="top:244.45px">
<span class="ln r">52</span>
<i class="fe"></i>
<span class="r c" style="left:97.75px">*/</span>
</div>
<div class="cl" style="top:260.7px">
<span class="ln r">53</span>
<span class="r k" style="left:89px">typedef</span>
<span class="r k" style="left:159px">struct</span>
</div>
<div class="cl" style="top:276.95px">
<span class="ln r">54</span>
<i class="fb"></i>
<span class="r " style="left:89px">{</span>
</div>
<div class="cl" style="top:293.2px">
<span class="ln r">55</span>
<i class="fl"></i>
<span class="r k" style="left:124px">void</span>
<span class="r " style="left:159px">(*task_func)(</span>
<span class="r k" style="left:272.75px">void</span>
<span class="r " style="left:307.75px">);</span>
<span class="r c" style="left:360.25px">//</span>
<span class="cj c" style="left:386.5px">任务函数指针</span>
</div>
<div class="cl" style="top:309.45px">
<span class="ln r">56</span>
<i class="fl"></i>
<span class="r " style="left:124px">uint32_t rate_ms;</span>
<span class="r c" style="left:360.25px">//</span>
<span class="cj c" style="left:386.5px">执行周期（毫秒）</span>
</div>
<div class="cl" style="top:325.7px">
<span class="ln r">57</span>
<i class="fl"></i>
<span class="r " style="left:124px">uint32_t last_run;</span>
<span class="r c" style="left:360.25px">//</span>
<span class="cj c" style="left:386.5px">上次执行的时间戳</span>
</div>
<div class="cl" style="top:341.95px">
<span class="ln r">58</span>
<i class="fl"></i>
<span class="r " style="left:89px">} task_t;</span>
</div>
<div class="cl" style="top:358.2px">
<span class="ln r">59</span>
<i class="fe"></i>
</div>
<div class="cl" style="top:374.45px">
<span class="ln r">60</span>
<i class="fb"></i>
<span class="r c" style="left:89px">/**</span>
</div>
<div class="cl" style="top:390.7px">
<span class="ln r">61</span>
<i class="fl"></i>
<span class="r c" style="left:97.75px">*</span>
<span class="r d" style="left:115.25px">@brief</span>
<span class="cj c" style="left:176.5px">任务调度表</span>
</div>
<div class="cl" style="top:406.95px">
<span class="ln r">62</span>
<i class="fl"></i>
<span class="r c" style="left:97.75px">*</span>
<span class="r d" style="left:115.25px">@note</span>
<span class="cj c" style="left:167.75px">当前为空表，可根据需要添加任务</span>
</div>
<div class="cl" style="top:423.2px">
<span class="ln r">63</span>
<i class="fl"></i>
<span class="r c" style="left:97.75px">*</span>
<span class="cj c" style="left:115.25px">示例格式：</span>
<span class="r c" style="left:196.5px">{</span>
<span class="cj c" style="left:205.25px">任务函数名</span>
<span class="r c" style="left:286.5px">,</span>
<span class="cj c" style="left:304px">执行周期</span>
<span class="r c" style="left:369px">,</span>
<span class="cj c" style="left:386.5px">上次执行时间</span>
<span class="r c" style="left:484px">}</span>
</div>
<div class="cl" style="top:439.45px">
<span class="ln r">64</span>
<i class="fe"></i>
<span class="r c" style="left:97.75px">*/</span>
</div>
<div class="cl" style="top:455.7px">
<span class="ln r">65</span>
<span class="r " style="left:89px">task_t scheduler_t[] =</span>
</div>
<div class="cl" style="top:471.95px">
<span class="ln r">66</span>
<i class="fb"></i>
<span class="r " style="left:89px">{</span>
</div>
<div class="cl" style="top:488.2px">
<span class="ln r">67</span>
<i class="fl"></i>
<span class="r " style="left:124px">{lcd_proc,</span>
<span class="r n" style="left:211.5px">100</span>
<span class="r " style="left:237.75px">,</span>
<span class="r n" style="left:255.25px">0</span>
<span class="r " style="left:264px">},</span>
</div>
<div class="cl" style="top:504.45px">
<span class="ln r">68</span>
<i class="fl"></i>
<span class="r " style="left:124px">{ic_proc,</span>
<span class="r n" style="left:211.5px">100</span>
<span class="r " style="left:237.75px">,</span>
<span class="r n" style="left:255.25px">0</span>
<span class="r " style="left:264px">}</span>
</div>
<div class="cl" style="top:520.7px">
<span class="ln r">69</span>
<i class="fl"></i>
</div>
<div class="cl" style="top:536.95px">
<div class="abs" style="left:89px;top:0;width:1466px;height:16px;background:#e0fde4"></div>
<span class="ln r">70</span>
<i class="fl"></i>
<span class="r " style="left:89px">};</span>
<div class="abs" style="left:106.5px;top:0;width:1px;height:16px;background:#000"></div>
</div>
<div class="cl" style="top:553.2px">
<span class="ln r">71</span>
<i class="fl"></i>
</div>
</div>
<div class="abs" style="left:1558px;top:0;width:21px;height:583px;background:#f0f0f0"></div>
<div class="abs" style="left:1567px;top:198px;width:3px;height:168px;background:#8b8b8b;border-radius:2px"></div>
<div class="abs" style="left:0;top:560.500px;width:1579px;height:22.500px;background:#f0f0f0"></div>
<div class="abs" style="left:21px;top:569.300px;width:887px;height:3.400px;background:#8b8b8b;border-radius:1.500px"></div>
</div></div>
<div class="redbox" style="left:375px;top:222px;width:950px;height:76px"></div>
<div class="redbox" style="left:374.500px;top:610.500px;width:305.500px;height:108px"></div>
<div class="badge" style="left:1334px;top:241px">3</div>
<div class="badge" style="left:694px;top:648px">4</div>
<div class="abs" style="left:0;top:748px;width:1920px;height:6px;background:#fdfdfd"></div>
<div class="hdr" style="left:0;top:754px;width:1918px;height:23px"><span class="t" style="left:4.3px;top:2.7px;letter-spacing:0.20px;">Build Output</span>
<svg class="pin" style="left:1878px;top:6px" width="10" height="13" viewBox="0 0 10 13"><path d="M2.300 .8h5.600v5.700l1.600 1.700v.7h-3.900v3.300h-1.300v-3.300h-3.900v-.7l1.600-1.700z M3.800 2v4.800h1.300v-4.800z" fill="#000" fill-rule="evenodd"/></svg>
<span class="xbtn" style="left:1899.700px;top:5px"><svg width="15" height="15"><path d="M4.5 4.5l6 6M10.5 4.5l-6 6" stroke="#fff" stroke-width="1.8"/></svg></span></div>
<div class="abs" style="left:0;top:777px;width:1920px;height:2px;background:#eef3f9"></div>
<div id="bo" class="abs"><div id="botext" class="abs">FromELF: creating hex file...
&quot;scheduler\scheduler.axf&quot; - 0 Error(s), 0 Warning(s).
Build Time Elapsed:  00:00:01
Load &quot;scheduler\\scheduler.axf&quot; 
Erase Done.
Programming Done.
Verify OK.
Application running ...
Flash Load finished at 10:43:06</div>
<div class="abs" style="left:1895px;top:0;width:21px;height:195px;background:#f0f0f0"></div>
<div class="abs" style="left:1904px;top:81px;width:3px;height:89px;background:#8b8b8b;border-radius:1.5px"></div>
<svg class="abs" style="left:5px;top:197px" width="12" height="12"><path d="M9 1v10l-7-5z" fill="#a3a3a3"/></svg>
<svg class="abs" style="left:1878px;top:197px" width="12" height="12"><path d="M2 1v10l7-5z" fill="#a3a3a3"/></svg>
</div>
<div id="status" class="abs">
<div class="abs" style="left:1222px;top:3px;width:1px;height:18px;background:#d2d2d2;box-shadow:1px 0 #fff"></div>
<div class="abs" style="left:1445px;top:3px;width:1px;height:18px;background:#d2d2d2;box-shadow:1px 0 #fff"></div>
<div class="abs" style="left:1616px;top:3px;width:1px;height:18px;background:#d2d2d2;box-shadow:1px 0 #fff"></div>
<div class="abs" style="left:1733px;top:3px;width:1px;height:18px;background:#d2d2d2;box-shadow:1px 0 #fff"></div>
<div class="abs" style="left:1765px;top:3px;width:1px;height:18px;background:#d2d2d2;box-shadow:1px 0 #fff"></div>
<div class="abs" style="left:1806px;top:3px;width:1px;height:18px;background:#d2d2d2;box-shadow:1px 0 #fff"></div>
<div class="abs" style="left:1845px;top:3px;width:1px;height:18px;background:#d2d2d2;box-shadow:1px 0 #fff"></div>
<div class="abs" style="left:1881px;top:3px;width:1px;height:18px;background:#d2d2d2;box-shadow:1px 0 #fff"></div>
<span class="t" style="left:1227.5px;top:3px;letter-spacing:-0.63px;">CMSIS-DAP Debugger</span>
<span class="t" style="left:1621.5px;top:3px;letter-spacing:-1.01px;">L:70 C:3</span>
<span class="t" style="left:1738px;top:3px;letter-spacing:-1.75px;color:#8a8a8a">CAP</span>
<span class="t" style="left:1770px;top:3px;letter-spacing:-0.59px;">NUM</span>
<span class="t" style="left:1810px;top:3px;letter-spacing:-1.95px;color:#8a8a8a">SCRL</span>
<span class="t" style="left:1849px;top:3px;letter-spacing:-1.24px;color:#8a8a8a">OVR</span>
<span class="t" style="left:1885.5px;top:3px;letter-spacing:-0.39px;color:#8a8a8a">R/W</span>
</div>
</body></html>
